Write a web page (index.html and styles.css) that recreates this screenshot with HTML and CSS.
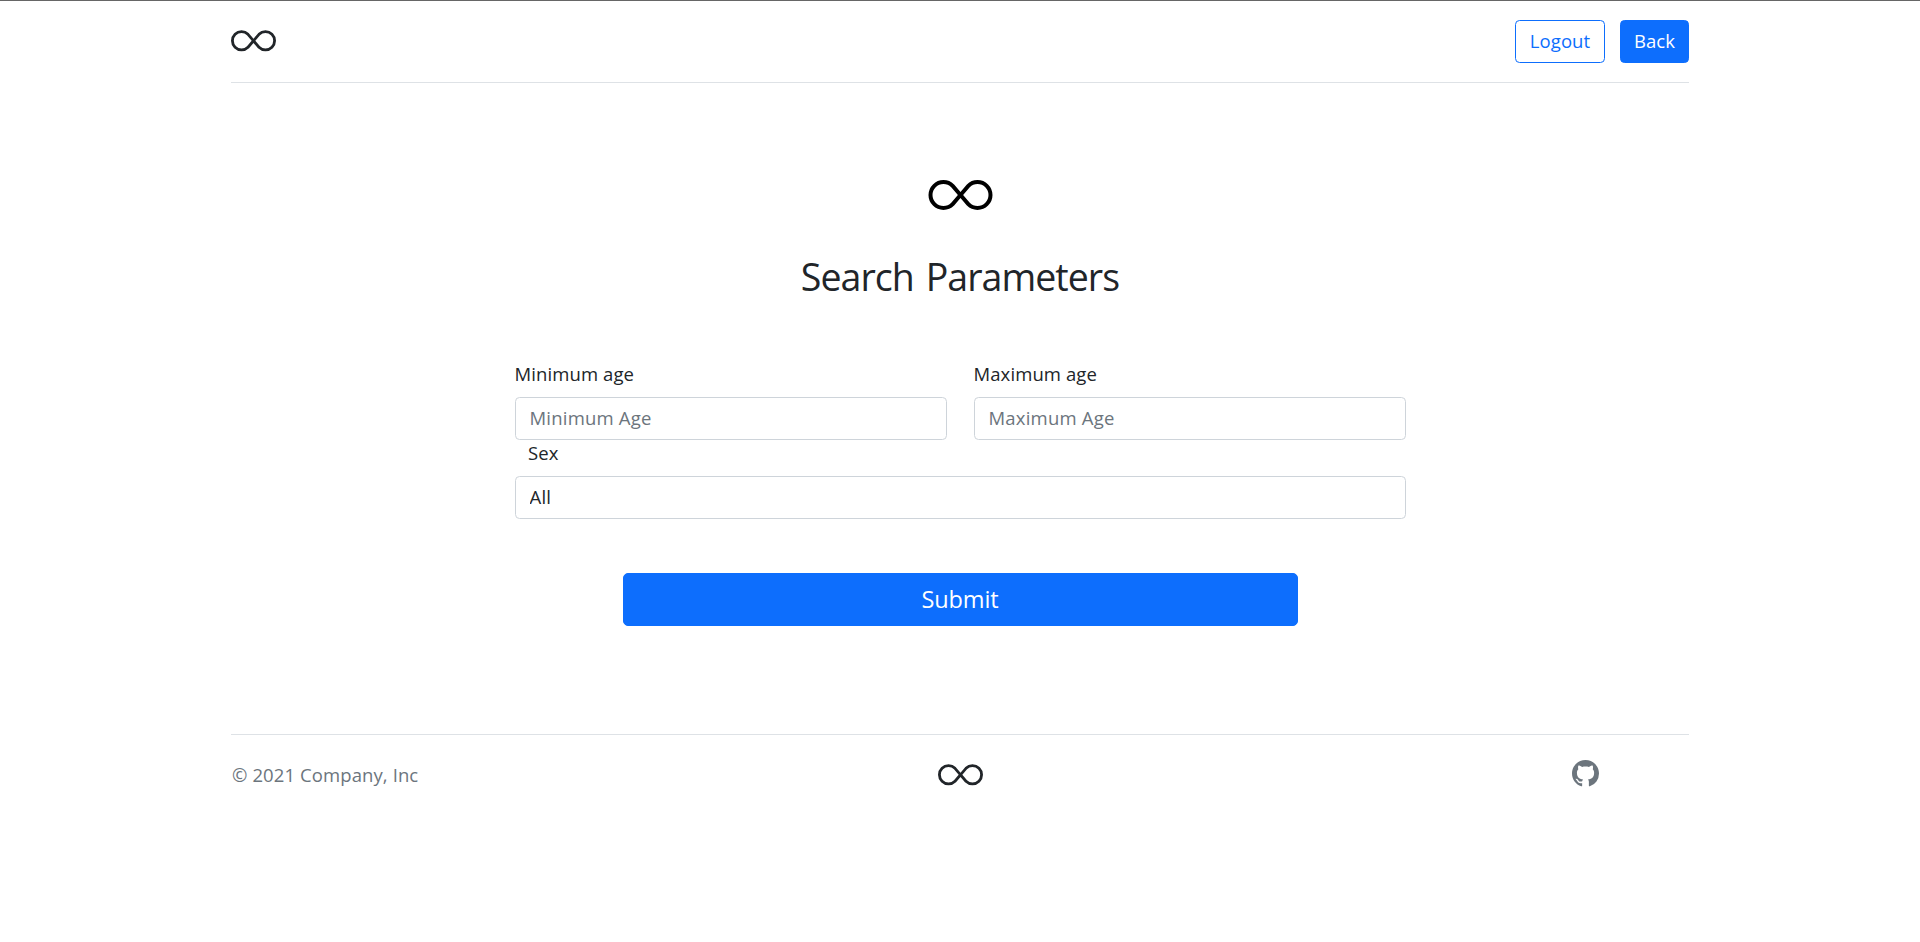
FILE: index.html
```html
<!DOCTYPE html>
<html lang="en">
<head>
<meta charset="utf-8">
<title>Search Parameters</title>
<link rel="stylesheet" href="styles.css">
</head>
<body>
<svg class="sprite" aria-hidden="true">
  <symbol id="infinity" viewBox="0 0 16 16"><path d="M5.68 5.792 7.345 7.75 5.681 9.708a2.75 2.75 0 1 1 0-3.916ZM8 6.978 6.416 5.113l-.014-.015a3.75 3.75 0 1 0 0 5.304l.014-.015L8 8.522l1.584 1.865.014.015a3.75 3.75 0 1 0 0-5.304l-.014.015L8 6.978Zm.656.772 1.663-1.958a2.75 2.75 0 1 1 0 3.916L8.656 7.75Z"/></symbol>
  <symbol id="github" viewBox="0 0 16 16"><path d="M8 0C3.58 0 0 3.58 0 8c0 3.54 2.29 6.53 5.47 7.59.4.07.55-.17.55-.38 0-.19-.01-.82-.01-1.49-2.01.37-2.53-.49-2.69-.94-.09-.23-.48-.94-.82-1.13-.28-.15-.68-.52-.01-.53.63-.01 1.08.58 1.23.82.72 1.21 1.87.87 2.33.66.07-.52.28-.87.51-1.07-1.78-.2-3.64-.89-3.64-3.95 0-.87.31-1.59.82-2.15-.08-.2-.36-1.02.08-2.12 0 0 .67-.21 2.2.82.64-.18 1.32-.27 2-.27.68 0 1.36.09 2 .27 1.53-1.04 2.2-.82 2.2-.82.44 1.1.16 1.92.08 2.12.51.56.82 1.27.82 2.15 0 3.07-1.87 3.75-3.65 3.95.29.25.54.73.54 1.48 0 1.07-.01 1.93-.01 2.2 0 .21.15.46.55.38A8.012 8.012 0 0 0 16 8c0-4.42-3.58-8-8-8z"/></symbol>
</svg>
<div class="container">
  <header class="header">
    <a class="logo"><svg><use href="#infinity"/></svg></a>
    <div class="actions">
      <button class="btn btn-outline">Logout</button>
      <button class="btn btn-primary">Back</button>
    </div>
  </header>
  <main class="main">
    <svg class="hero-icon"><use href="#infinity"/></svg>
    <h1 class="title">Search Parameters</h1>
    <form class="form">
      <div class="row">
        <div class="field">
          <label class="label" for="min">Minimum age</label>
          <input class="control" id="min" placeholder="Minimum Age">
        </div>
        <div class="field">
          <label class="label" for="max">Maximum age</label>
          <input class="control" id="max" placeholder="Maximum Age">
        </div>
      </div>
      <label class="label label-sex" for="sex">Sex</label>
      <input class="control" id="sex" value="All">
      <button class="btn btn-primary submit" type="button">Submit</button>
    </form>
  </main>
  <footer class="footer">
    <p class="copyright">© 2021 Company, Inc</p>
    <a class="logo"><svg><use href="#infinity"/></svg></a>
    <div class="social"><svg class="github"><use href="#github"/></svg></div>
  </footer>
</div>
</body>
</html>
```
FILE: styles.css
```css
* { box-sizing: border-box; }
body {
  margin: 0;
  border-top: 1px solid #666;
  background: #fff;
  color: #212529;
  font: 18.5px/27px "Open Sans", "Noto Sans", sans-serif;
  letter-spacing: .1px;
}
svg { display: block; fill: currentColor; }
.sprite { position: absolute; width: 0; height: 0; }
.container { width: 1458px; margin: 0 auto; }
.header {
  display: flex;
  justify-content: space-between;
  align-items: flex-start;
  height: 82px;
  padding-top: 19px;
  border-bottom: 1px solid #dee2e6;
}
.logo svg { width: 45px; height: 45px; }
.header .logo { margin-top: -1px; }
.actions { display: flex; gap: 15px; }
.btn {
  height: 43px;
  padding: 0 0 2px;
  border: 1px solid #0d6efd;
  border-radius: 4.5px;
  font: inherit;
  letter-spacing: inherit;
}
.btn-outline { width: 90px; background: #fff; color: #0d6efd; }
.btn-primary { width: 69px; background: #0d6efd; color: #fff; }
.main { padding-top: 81px; }
.hero-icon { width: 65px; height: 64px; margin: 0 auto; color: #000; }
.title {
  margin: 25px 0 0;
  font-size: 37.5px;
  line-height: 47px;
  font-weight: 400;
  letter-spacing: -.95px;
  word-spacing: 3px;
  text-align: center;
}
.form { width: 891px; margin: 61px auto 0; }
.row { display: grid; grid-template-columns: 1fr 1fr; gap: 27px; }
.label { display: block; height: 27px; margin-bottom: 9px; line-height: 25px; }
.label-sex { margin-left: 13.5px; }
.control {
  display: block;
  width: 100%;
  height: 43px;
  padding: 0 14px 2px;
  border: 1px solid #ced4da;
  border-radius: 4.5px;
  background: #fff;
  color: #212529;
  font: inherit;
  letter-spacing: .2px;
}
.control::placeholder { color: #6c757d; opacity: 1; }
.submit {
  display: block;
  width: 675px;
  height: 53px;
  margin: 54px auto 0;
  padding: 0;
  border-radius: 5px;
  font-size: 23.5px;
  letter-spacing: -.15px;
}
.footer {
  display: grid;
  grid-template-columns: 1fr 45px 1fr;
  margin-top: 108px;
  padding-top: 18px;
  border-top: 1px solid #dee2e6;
}
.copyright { margin: 8px 0 0 1px; color: #6c757d; }
.social { padding: 7px 90px 0 0; }
.github { width: 27px; height: 27px; margin-left: auto; color: #6c757d; }
```
